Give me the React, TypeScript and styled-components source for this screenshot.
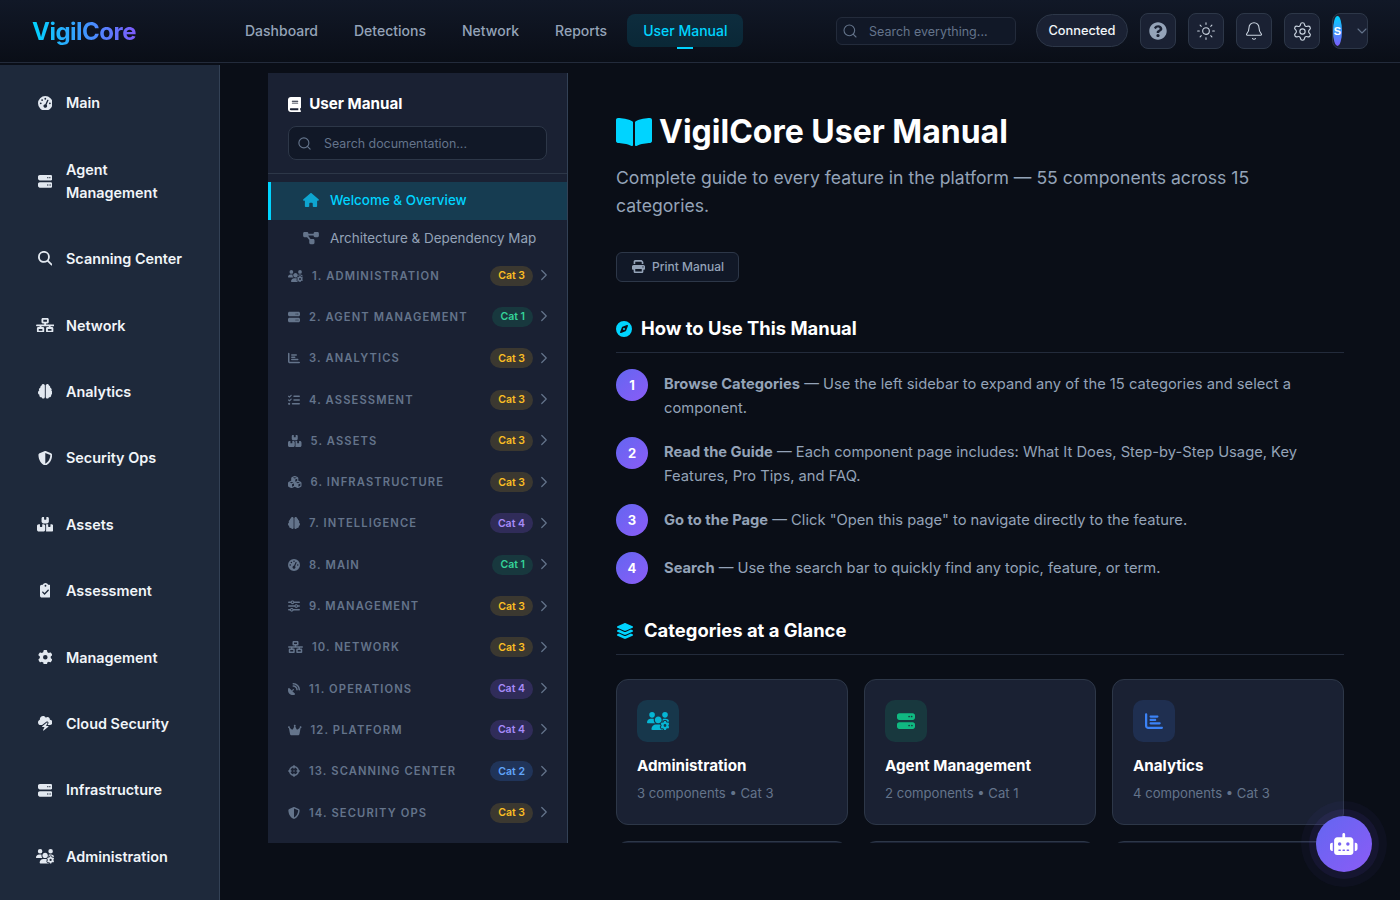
import React from "react";
import styled, { createGlobalStyle } from "styled-components";
import { Bell, ChevronDown, ChevronRight, Search, Settings, Sun } from "lucide-react";
import { FaBookOpen, FaQuestionCircle } from "react-icons/fa";
import {
  FaBook,
  FaBoxesStacked,
  FaBrain,
  FaChartBar,
  FaClipboardCheck,
  FaCloudBolt,
  FaCompass,
  FaCrosshairs,
  FaCrown,
  FaCubes,
  FaDiagramProject,
  FaGaugeHigh,
  FaGear,
  FaHouse,
  FaLayerGroup,
  FaListCheck,
  FaMagnifyingGlass,
  FaNetworkWired,
  FaPrint,
  FaRobot,
  FaSatelliteDish,
  FaServer,
  FaShieldHalved,
  FaSliders,
  FaUsersGear,
} from "react-icons/fa6";

// react-icons draws every icon in a 1em square, font awesome's own widths are wider or narrower
const GlobalStyle = createGlobalStyle`
  html, body {
    margin: 0;
    height: 100%;
    background: #0a0e17;
    font-family: Inter, "Noto Sans", sans-serif;
    overflow: hidden;
  }
  * {
    box-sizing: border-box;
  }
  svg[viewBox="0 0 640 512"] {
    width: 1.25em;
  }
  svg[viewBox="0 0 576 512"] {
    width: 1.125em;
  }
  svg[viewBox="0 0 448 512"] {
    width: 0.875em;
  }
  svg[viewBox="0 0 384 512"] {
    width: 0.75em;
  }
`;

const Page = styled.div`
  height: 100vh;
  display: flex;
  flex-direction: column;
  overflow: hidden;
`;

const TopBar = styled.header`
  height: 63px;
  flex-shrink: 0;
  display: flex;
  align-items: center;
  padding: 0 32px;
  background: linear-gradient(180deg, #111827, #0a0e17);
  border-bottom: 1px solid #232b3b;
`;

const Logo = styled.div`
  width: 197px;
  font-size: 24px;
  font-weight: 700;
  letter-spacing: -0.5px;
  background: linear-gradient(90deg, #00d4ff 0, #7c5cfc 103px);
  -webkit-background-clip: text;
  background-clip: text;
  color: transparent;
`;

const TopNav = styled.nav`
  display: flex;
  gap: 4px;
  margin-bottom: 1px;
`;

const NavLink = styled.a<{ $active?: boolean }>`
  position: relative;
  padding: 6px 16px 5px;
  border-radius: 8px;
  font-size: 14px;
  line-height: 22px;
  font-weight: 500;
  color: ${(p) => (p.$active ? "#00d4ff" : "#94a3b8")};
  background: ${(p) => (p.$active ? "rgba(0, 212, 255, 0.12)" : "transparent")};

  ${(p) =>
    p.$active &&
    `&::after {
      content: "";
      position: absolute;
      left: 50%;
      bottom: -2px;
      width: 16px;
      height: 2px;
      margin-left: -8px;
      background: #00d4ff;
    }`}
`;

const TopRight = styled.div`
  margin-left: auto;
  display: flex;
  align-items: center;
  gap: 12px;
`;

const TopSearch = styled.div`
  width: 180px;
  height: 28px;
  margin-right: 8px;
  display: flex;
  align-items: center;
  gap: 11px;
  padding: 0 5px;
  border: 1px solid #232b3b;
  border-radius: 6px;
  background: #111827;
  color: #64748b;
  font-size: 12.5px;
`;

const Connected = styled.div`
  width: 92px;
  height: 33px;
  margin-bottom: 1px;
  display: flex;
  align-items: center;
  justify-content: center;
  border: 1px solid #2d3748;
  border-radius: 17px;
  background: #1a2133;
  color: #f1f5f9;
  font-size: 12.8px;
  font-weight: 500;
`;

const IconButton = styled.button`
  width: 36px;
  height: 36px;
  padding: 0;
  display: flex;
  align-items: center;
  justify-content: center;
  border: 1px solid #2d3748;
  border-radius: 8px;
  background: #1a2133;
  color: #cbd5e1;
`;

const UserButton = styled(IconButton)`
  justify-content: flex-start;
  gap: 12px;
  color: #64748b;

  svg {
    flex-shrink: 0;
  }
`;

const Avatar = styled.span`
  width: 9px;
  height: 30px;
  flex-shrink: 0;
  display: flex;
  align-items: center;
  justify-content: center;
  border-radius: 50%;
  background: linear-gradient(180deg, #00d4ff, #7c5cfc);
  color: #fff;
  font-size: 11px;
  font-weight: 700;
`;

const Body = styled.div`
  flex: 1;
  min-height: 0;
  display: flex;
  padding-top: 2px;
`;

const SideBar = styled.aside`
  width: 220px;
  flex-shrink: 0;
  padding-top: 4.7px;
  background: #1e293b;
  border-right: 1px solid #334155;
  overflow: hidden;
`;

const SideItem = styled.a`
  display: flex;
  align-items: center;
  gap: 11px;
  padding: 21.68px 36px 21.68px 35px;
  color: #f1f5f9;
  font-size: 14.4px;
  line-height: 23.04px;
  font-weight: 600;
`;

const SideIcon = styled.span`
  width: 20px;
  flex-shrink: 0;
  display: flex;
  justify-content: center;
  color: #e2e8f0;

  svg {
    font-size: 14.6px;
  }
`;

const Main = styled.main`
  flex: 1;
  min-width: 0;
  height: 778px;
  display: flex;
  padding: 8px 0 0 48px;
`;

const ManualNav = styled.div`
  width: 300px;
  flex-shrink: 0;
  background: #1a2133;
  border-right: 1px solid #334155;
  overflow: hidden;
`;

const ManualHead = styled.div`
  padding: 20px 20px 13px;
  border-bottom: 1px solid #2d3748;
`;

const ManualTitle = styled.h2`
  margin: 0 0 11px;
  display: flex;
  align-items: center;
  gap: 8px;
  color: #fff;
  font-size: 15.2px;
  line-height: 22px;
  font-weight: 700;

  svg {
    font-size: 15px;
  }
`;

const DocSearch = styled.div`
  width: 259px;
  height: 34px;
  display: flex;
  align-items: center;
  gap: 12px;
  padding: 0 8px;
  border: 1px solid #2d3748;
  border-radius: 8px;
  background: #111827;
  color: #64748b;
  font-size: 12.4px;
`;

const NavList = styled.div`
  padding-top: 8px;
`;

const PageRow = styled.a<{ $active?: boolean }>`
  height: ${(p) => (p.$active ? "38px" : "35px")};
  display: flex;
  align-items: center;
  gap: 11px;
  padding-left: ${(p) => (p.$active ? "32px" : "35px")};
  padding-bottom: ${(p) => (p.$active ? "2px" : "0")};
  border-left: ${(p) => (p.$active ? "3px solid #00d4ff" : "none")};
  background: ${(p) => (p.$active ? "rgba(0, 212, 255, 0.15)" : "transparent")};
  color: ${(p) => (p.$active ? "#00d4ff" : "#94a3b8")};
  font-size: 13.44px;
  font-weight: ${(p) => (p.$active ? 500 : 400)};

  && svg {
    width: 16px;
    height: 14px;
    color: ${(p) => (p.$active ? "#0ea5d0" : "#64748b")};
  }
`;

const CatRow = styled.a`
  height: 41.3px;
  display: flex;
  align-items: center;
  gap: 9px;
  padding: 0 20px;
  color: #64748b;
  font-size: 11.2px;
  font-weight: 600;
  letter-spacing: 1.12px;
  text-transform: uppercase;

  > svg:first-child {
    font-size: 12px;
    flex-shrink: 0;
  }
`;

const CatName = styled.span`
  flex: 1;
  white-space: nowrap;
`;

const tones = {
  amber: { fg: "#fbbf24", bg: "rgba(251, 191, 36, 0.15)" },
  green: { fg: "#34d399", bg: "rgba(16, 185, 129, 0.15)" },
  purple: { fg: "#a78bfa", bg: "rgba(139, 92, 246, 0.2)" },
  blue: { fg: "#60a5fa", bg: "rgba(59, 130, 246, 0.2)" },
};

type Tone = keyof typeof tones;

const Badge = styled.span<{ $tone: Tone }>`
  height: 20px;
  padding: 0 8px;
  display: flex;
  align-items: center;
  border-radius: 10px;
  letter-spacing: 0;
  text-transform: none;
  font-size: 10.5px;
  font-weight: 600;
  color: ${(p) => tones[p.$tone].fg};
  background: ${(p) => tones[p.$tone].bg};
`;

const Chevron = styled(ChevronRight)`
  width: 18px;
  height: 18px;
  flex-shrink: 0;
  margin: 0 -6px 1px -7px;
  stroke-width: 1.6;
  color: #64748b;
`;

const Article = styled.article`
  flex: 1;
  min-width: 0;
  padding: 37px 56px 0 48px;
  overflow: hidden;
`;

const PageTitle = styled.h1`
  margin: 0 0 10px;
  display: flex;
  align-items: center;
  gap: 7px;
  color: #fff;
  font-size: 32px;
  line-height: 44px;
  font-weight: 700;

  svg {
    color: #00d4ff;
  }
`;

const Lead = styled.p`
  margin: 0 0 32px;
  color: #94a3b8;
  font-size: 17.6px;
  line-height: 28px;
`;

const PrintButton = styled.button`
  height: 30px;
  padding: 0 14px 1px 15px;
  display: flex;
  align-items: center;
  gap: 7px;
  border: 1px solid #2d3748;
  border-radius: 6px;
  background: #111827;
  color: #94a3b8;
  font-family: inherit;
  font-size: 12px;
  font-weight: 500;

  svg {
    font-size: 13px;
  }
`;

const SectionHead = styled.h2<{ $gap: number; $top: number }>`
  margin: ${(p) => p.$top}px 0 16px;
  padding-bottom: 10px;
  display: flex;
  align-items: center;
  gap: ${(p) => p.$gap}px;
  border-bottom: 1px solid #232b3b;
  color: #fff;
  font-size: 18.4px;
  line-height: 27px;
  font-weight: 700;

  svg {
    font-size: 16px;
    color: #00d4ff;
  }
`;

const Steps = styled.div`
  display: flex;
  flex-direction: column;
  gap: 16px;
`;

const Step = styled.div`
  display: flex;
  align-items: flex-start;
  gap: 16px;
`;

const StepNum = styled.span`
  width: 32px;
  height: 32px;
  flex-shrink: 0;
  display: flex;
  align-items: center;
  justify-content: center;
  border-radius: 50%;
  background: linear-gradient(135deg, #6366f1, #8b5cf6);
  color: #fff;
  font-size: 13px;
  font-weight: 700;
`;

const StepText = styled.div`
  padding: 3.4px 0 0.2px;
  color: #94a3b8;
  font-size: 14.72px;
  line-height: 24px;

  strong {
    font-weight: 700;
  }
`;

const CardGrid = styled.div`
  margin-top: 24px;
  display: grid;
  grid-template-columns: repeat(3, 232px);
  gap: 15.5px 16px;
`;

const Card = styled.div`
  height: 146px;
  padding: 20px;
  border: 1px solid #2d3748;
  border-radius: 12px;
  background: #1a2133;
`;

const CardIcon = styled.div<{ $color: string; $bg: string }>`
  width: 42px;
  height: 42px;
  display: flex;
  align-items: center;
  justify-content: center;
  border-radius: 10px;
  color: ${(p) => p.$color};
  background: ${(p) => p.$bg};

  svg {
    font-size: 18px;
  }
`;

const CardTitle = styled.div`
  margin-top: 12px;
  color: #fff;
  font-size: 15.2px;
  line-height: 24px;
  font-weight: 700;
`;

const CardSub = styled.div`
  margin-top: 4px;
  color: #64748b;
  font-size: 13.12px;
  line-height: 22px;
`;

const RobotButton = styled.button`
  position: fixed;
  right: 28px;
  bottom: 28px;
  width: 56px;
  height: 56px;
  padding: 0;
  display: flex;
  align-items: center;
  justify-content: center;
  border: none;
  border-radius: 50%;
  background: linear-gradient(135deg, #6366f1, #8b5cf6);
  color: #fff;
  box-shadow: 0 0 0 7px rgba(124, 92, 252, 0.08), 0 0 0 15px rgba(124, 92, 252, 0.04);

  svg {
    font-size: 22px;
  }
`;

const sideItems: [React.ReactNode, string][] = [
  [<FaGaugeHigh />, "Main"],
  [<FaServer />, "Agent Management"],
  [<FaMagnifyingGlass />, "Scanning Center"],
  [<FaNetworkWired />, "Network"],
  [<FaBrain />, "Analytics"],
  [<FaShieldHalved />, "Security Ops"],
  [<FaBoxesStacked />, "Assets"],
  [<FaClipboardCheck />, "Assessment"],
  [<FaGear />, "Management"],
  [<FaCloudBolt />, "Cloud Security"],
  [<FaServer />, "Infrastructure"],
  [<FaUsersGear />, "Administration"],
];

const categories: [React.ReactNode, string, string, Tone][] = [
  [<FaUsersGear />, "1. Administration", "Cat 3", "amber"],
  [<FaServer />, "2. Agent Management", "Cat 1", "green"],
  [<FaChartBar />, "3. Analytics", "Cat 3", "amber"],
  [<FaListCheck />, "4. Assessment", "Cat 3", "amber"],
  [<FaBoxesStacked />, "5. Assets", "Cat 3", "amber"],
  [<FaCubes />, "6. Infrastructure", "Cat 3", "amber"],
  [<FaBrain />, "7. Intelligence", "Cat 4", "purple"],
  [<FaGaugeHigh />, "8. Main", "Cat 1", "green"],
  [<FaSliders />, "9. Management", "Cat 3", "amber"],
  [<FaNetworkWired />, "10. Network", "Cat 3", "amber"],
  [<FaSatelliteDish />, "11. Operations", "Cat 4", "purple"],
  [<FaCrown />, "12. Platform", "Cat 4", "purple"],
  [<FaCrosshairs />, "13. Scanning Center", "Cat 2", "blue"],
  [<FaShieldHalved />, "14. Security Ops", "Cat 3", "amber"],
];

const steps: [string, string][] = [
  ["Browse Categories", " — Use the left sidebar to expand any of the 15 categories and select a component."],
  ["Read the Guide", " — Each component page includes: What It Does, Step-by-Step Usage, Key Features, Pro Tips, and FAQ."],
  ["Go to the Page", " — Click \"Open this page\" to navigate directly to the feature."],
  ["Search", " — Use the search bar to quickly find any topic, feature, or term."],
];

const cards = [
  { icon: <FaUsersGear />, color: "#06b6d4", bg: "rgba(6, 182, 212, 0.15)", title: "Administration", sub: "3 components • Cat 3" },
  { icon: <FaServer />, color: "#10b981", bg: "rgba(16, 185, 129, 0.15)", title: "Agent Management", sub: "2 components • Cat 1" },
  { icon: <FaChartBar />, color: "#3b82f6", bg: "rgba(59, 130, 246, 0.15)", title: "Analytics", sub: "4 components • Cat 3" },
  { icon: <FaListCheck />, color: "#06b6d4", bg: "rgba(6, 182, 212, 0.15)", title: "Assessment", sub: "3 components • Cat 3" },
  { icon: <FaBoxesStacked />, color: "#10b981", bg: "rgba(16, 185, 129, 0.15)", title: "Assets", sub: "3 components • Cat 3" },
  { icon: <FaCubes />, color: "#3b82f6", bg: "rgba(59, 130, 246, 0.15)", title: "Infrastructure", sub: "4 components • Cat 3" },
];

export default function App() {
  return (
    <Page>
      <GlobalStyle />
      <TopBar>
        <Logo>VigilCore</Logo>
        <TopNav>
          <NavLink>Dashboard</NavLink>
          <NavLink>Detections</NavLink>
          <NavLink>Network</NavLink>
          <NavLink>Reports</NavLink>
          <NavLink $active>User Manual</NavLink>
        </TopNav>
        <TopRight>
          <TopSearch>
            <Search size={16} strokeWidth={1.6} />
            Search everything...
          </TopSearch>
          <Connected>Connected</Connected>
          <IconButton>
            <FaQuestionCircle size={18} color="#94a3b8" />
          </IconButton>
          <IconButton>
            <Sun size={20} strokeWidth={1.3} />
          </IconButton>
          <IconButton>
            <Bell size={20} strokeWidth={1.3} />
          </IconButton>
          <IconButton>
            <Settings size={21} strokeWidth={1.3} />
          </IconButton>
          <UserButton>
            <Avatar>S</Avatar>
            <ChevronDown size={16} strokeWidth={1.6} />
          </UserButton>
        </TopRight>
      </TopBar>
      <Body>
        <SideBar>
          {sideItems.map(([icon, label]) => (
            <SideItem key={label}>
              <SideIcon>{icon}</SideIcon>
              {label}
            </SideItem>
          ))}
        </SideBar>
        <Main>
          <ManualNav>
            <ManualHead>
              <ManualTitle>
                <FaBook />
                User Manual
              </ManualTitle>
              <DocSearch>
                <Search size={15} strokeWidth={1.8} />
                Search documentation...
              </DocSearch>
            </ManualHead>
            <NavList>
              <PageRow $active>
                <FaHouse />
                Welcome &amp; Overview
              </PageRow>
              <PageRow>
                <FaDiagramProject />
                Architecture &amp; Dependency Map
              </PageRow>
              {categories.map(([icon, label, cat, tone]) => (
                <CatRow key={label}>
                  {icon}
                  <CatName>{label}</CatName>
                  <Badge $tone={tone}>{cat}</Badge>
                  <Chevron />
                </CatRow>
              ))}
            </NavList>
          </ManualNav>
          <Article>
            <PageTitle>
              <FaBookOpen />
              VigilCore User Manual
            </PageTitle>
            <Lead>Complete guide to every feature in the platform — 55 components across 15 categories.</Lead>
            <PrintButton>
              <FaPrint />
              Print Manual
            </PrintButton>
            <SectionHead $gap={9} $top={33}>
              <FaCompass />
              How to Use This Manual
            </SectionHead>
            <Steps>
              {steps.map(([head, rest], i) => (
                <Step key={head}>
                  <StepNum>{i + 1}</StepNum>
                  <StepText>
                    <strong>{head}</strong>
                    {rest}
                  </StepText>
                </Step>
              ))}
            </Steps>
            <SectionHead $gap={10} $top={33}>
              <FaLayerGroup />
              Categories at a Glance
            </SectionHead>
            <CardGrid>
              {cards.map((c) => (
                <Card key={c.title}>
                  <CardIcon $color={c.color} $bg={c.bg}>
                    {c.icon}
                  </CardIcon>
                  <CardTitle>{c.title}</CardTitle>
                  <CardSub>{c.sub}</CardSub>
                </Card>
              ))}
            </CardGrid>
          </Article>
        </Main>
      </Body>
      <RobotButton>
        <FaRobot />
      </RobotButton>
    </Page>
  );
}
